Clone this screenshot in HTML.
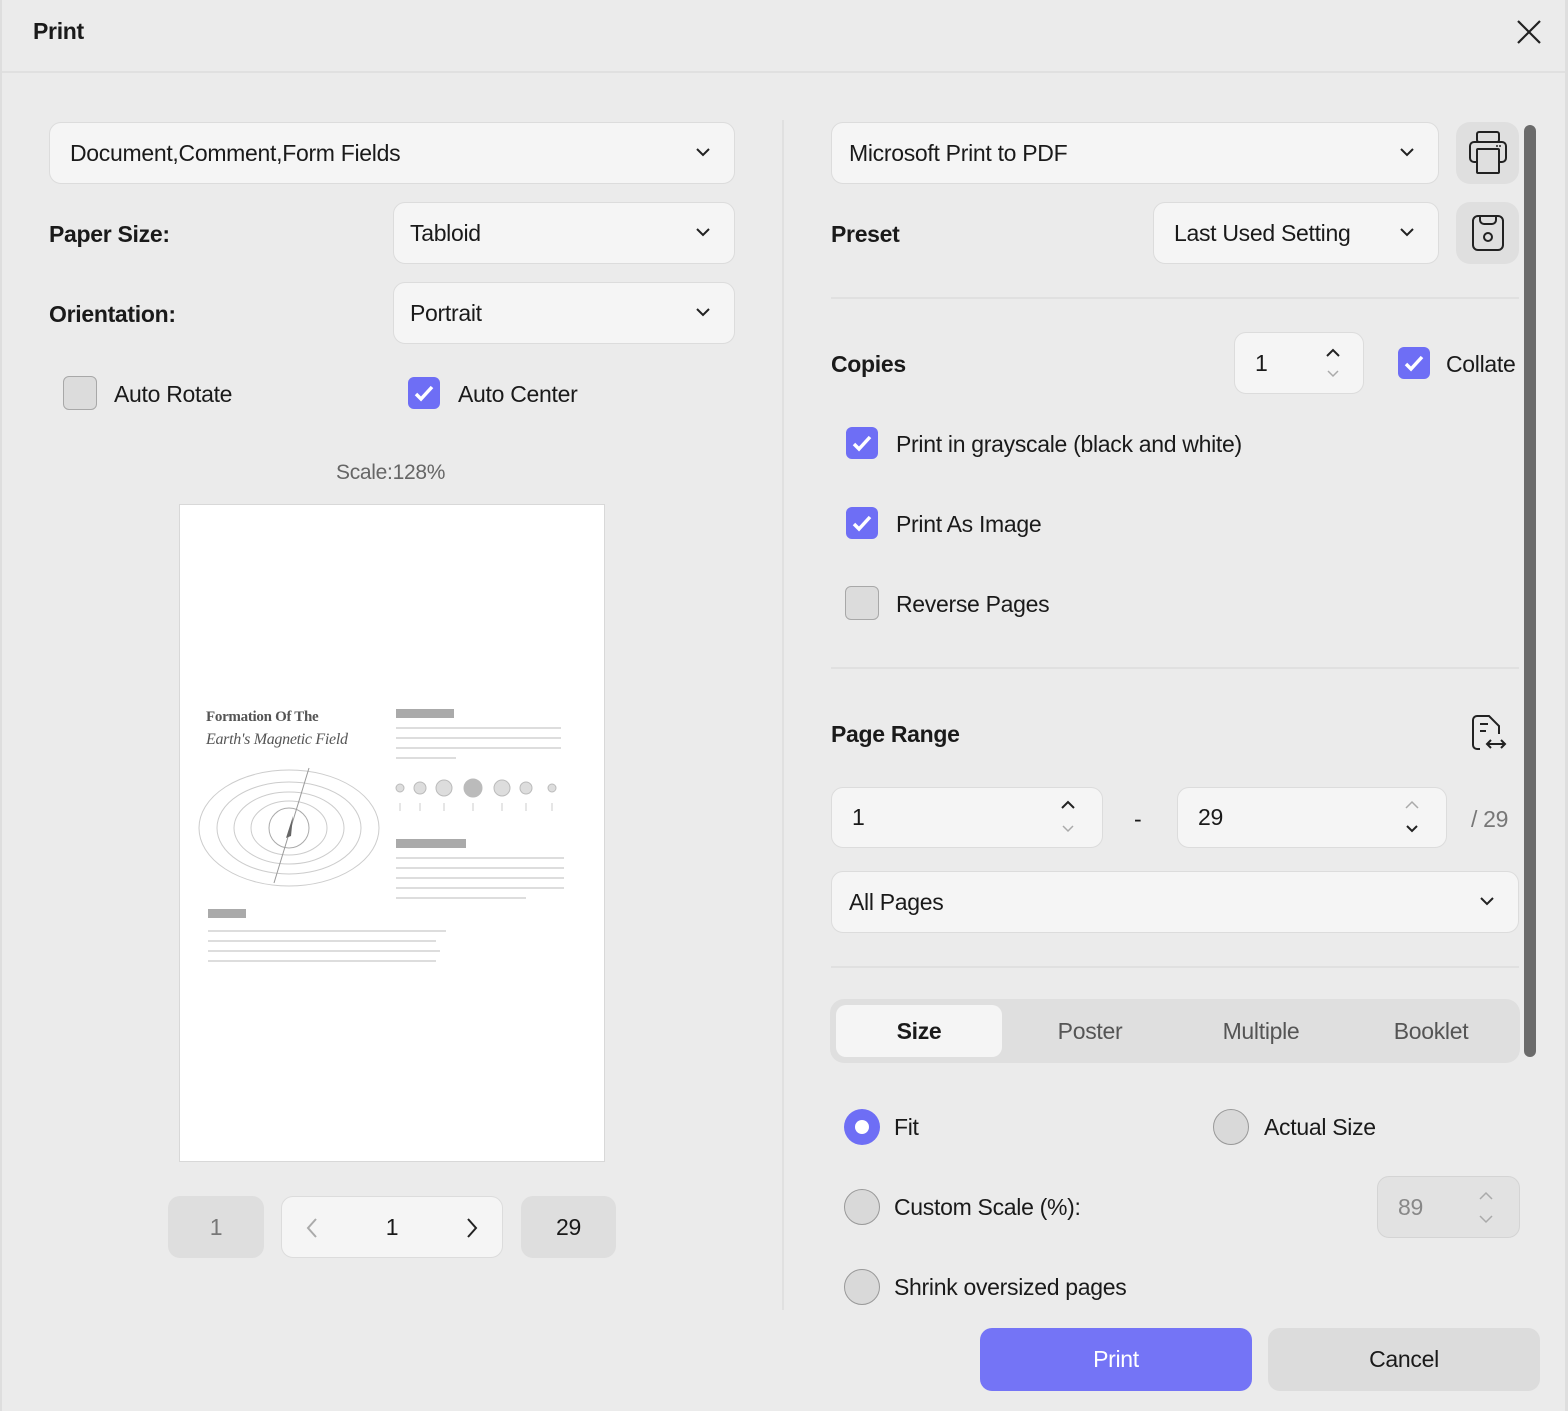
<!DOCTYPE html>
<html><head><meta charset="utf-8"><style>
*{box-sizing:border-box;margin:0;padding:0}
body{width:1568px;height:1411px;background:#ebebeb;font-family:"Liberation Sans",sans-serif;color:#1a1a1a;position:relative;overflow:hidden;letter-spacing:-0.3px}
.a{position:absolute}
.box{position:absolute;background:#f5f5f5;border:1.5px solid #dcdcdc;border-radius:12px;font-size:23px;display:flex;align-items:center;padding-left:18px}
.chev{position:absolute;right:24px;top:50%;margin-top:-5px}
.lbl{position:absolute;font-size:23px;font-weight:bold}
.t{position:absolute;font-size:23px}
.cb{position:absolute;width:32px;height:32px;border-radius:6px;background:#6e6ef5}
.cb.off{background:#dcdcdc;border:1.5px solid #a8a8a8}
.rd{position:absolute;width:36px;height:36px;border-radius:50%;background:#d9d9d9;border:1.5px solid #999}
.hr{position:absolute;height:1.5px;background:#e0e0e0}
.gl{position:absolute;height:2px;background:#ddd}
</style></head><body>
<div class="a" style="left:0;top:0;width:2px;height:1411px;background:#dedede"></div>
<div class="a" style="right:0;top:0;width:3px;height:1411px;background:#dedede"></div>
<div class="a" style="left:33px;top:18px;font-size:23px;font-weight:bold">Print</div>
<svg class="a" style="left:1516px;top:19px" width="26" height="26" viewBox="0 0 26 26"><path d="M2 2L24 24M24 2L2 24" stroke="#222" stroke-width="2.2"/></svg>
<div class="hr" style="left:2px;top:71px;width:1563px"></div>

<!-- left -->
<div class="box" style="left:49px;top:122px;width:686px;height:62px;padding-left:20px">Document,Comment,Form Fields<svg class="chev" width="14" height="9" viewBox="0 0 14 9"><path d="M1 1l6 6 6-6" fill="none" stroke="#222" stroke-width="2"/></svg></div>
<div class="lbl" style="left:49px;top:221px">Paper Size:</div>
<div class="box" style="left:393px;top:202px;width:342px;height:62px;padding-left:16px">Tabloid<svg class="chev" width="14" height="9" viewBox="0 0 14 9"><path d="M1 1l6 6 6-6" fill="none" stroke="#222" stroke-width="2"/></svg></div>
<div class="lbl" style="left:49px;top:301px">Orientation:</div>
<div class="box" style="left:393px;top:282px;width:342px;height:62px;padding-left:16px">Portrait<svg class="chev" width="14" height="9" viewBox="0 0 14 9"><path d="M1 1l6 6 6-6" fill="none" stroke="#222" stroke-width="2"/></svg></div>
<div class="cb off" style="left:63px;top:376px;width:34px;height:34px"></div>
<div class="t" style="left:114px;top:381px">Auto Rotate</div>
<div class="cb" style="left:408px;top:377px"><svg width="32" height="32"><path d="M8 17l5 5 11-12" fill="none" stroke="#fff" stroke-width="3.5"/></svg></div>
<div class="t" style="left:458px;top:381px">Auto Center</div>
<div class="t" style="left:336px;top:461px;font-size:21px;color:#666">Scale:128%</div>

<div class="a" style="left:179px;top:504px;width:426px;height:658px;background:#fff;border:1px solid #d8d8d8">
 <div class="a" style="left:26px;top:204px;font-family:'Liberation Serif',serif;font-size:15px;font-weight:bold;color:#555">Formation Of The</div>
 <div class="a" style="left:26px;top:226px;font-family:'Liberation Serif',serif;font-size:16px;font-style:italic;color:#555">Earth's Magnetic Field</div>
 <svg class="a" style="left:14px;top:258px" width="190" height="130" viewBox="0 0 190 130">
  <g fill="none" stroke="#ccc" stroke-width="1">
   <ellipse cx="95" cy="65" rx="90" ry="58"/><ellipse cx="95" cy="65" rx="72" ry="46"/><ellipse cx="95" cy="65" rx="55" ry="36"/><ellipse cx="95" cy="65" rx="38" ry="27"/><circle cx="95" cy="65" r="20" stroke="#aaa"/>
   <path d="M80 120L115 5" stroke="#999"/>
  </g><path d="M92 75l7-22-2 20z" fill="#666"/>
 </svg>
 <div class="a" style="left:216px;top:204px;width:58px;height:9px;background:#aaa"></div>
 <div class="gl" style="left:216px;top:222px;width:165px"></div><div class="gl" style="left:216px;top:232px;width:165px"></div><div class="gl" style="left:216px;top:242px;width:165px"></div><div class="gl" style="left:216px;top:252px;width:60px"></div>
 <svg class="a" style="left:212px;top:270px" width="175" height="45"><g fill="#ddd" stroke="#bbb"><circle cx="8" cy="13" r="4"/><circle cx="28" cy="13" r="6"/><circle cx="52" cy="13" r="8"/><circle cx="81" cy="13" r="9" fill="#bbb"/><circle cx="110" cy="13" r="8"/><circle cx="134" cy="13" r="6"/><circle cx="160" cy="13" r="4"/></g><g stroke="#ccc"><path d="M8 28v8M28 28v8M52 28v8M81 28v8M110 28v8M134 28v8M160 28v8"/></g></svg>
 <div class="a" style="left:216px;top:334px;width:70px;height:9px;background:#aaa"></div>
 <div class="gl" style="left:216px;top:352px;width:168px"></div><div class="gl" style="left:216px;top:362px;width:168px"></div><div class="gl" style="left:216px;top:372px;width:168px"></div><div class="gl" style="left:216px;top:382px;width:168px"></div><div class="gl" style="left:216px;top:392px;width:130px"></div>
 <div class="a" style="left:28px;top:404px;width:38px;height:9px;background:#aaa"></div>
 <div class="gl" style="left:28px;top:425px;width:238px"></div><div class="gl" style="left:28px;top:435px;width:228px"></div><div class="gl" style="left:28px;top:445px;width:232px"></div><div class="gl" style="left:28px;top:455px;width:228px"></div>
</div>

<div class="a" style="left:168px;top:1196px;width:96px;height:62px;border-radius:12px;background:#dedede;font-size:23px;color:#777;text-align:center;line-height:62px">1</div>
<div class="box" style="left:281px;top:1196px;width:222px;height:62px;padding:0;justify-content:center">1
 <svg class="a" style="left:24px;top:20px" width="12" height="22"><path d="M10 2L2 11l8 9" fill="none" stroke="#aaa" stroke-width="2"/></svg>
 <svg class="a" style="right:24px;top:20px" width="12" height="22"><path d="M2 2l8 9-8 9" fill="none" stroke="#222" stroke-width="2"/></svg></div>
<div class="a" style="left:521px;top:1196px;width:95px;height:62px;border-radius:12px;background:#dedede;font-size:23px;text-align:center;line-height:62px">29</div>

<div class="a" style="left:782px;top:120px;width:1.5px;height:1190px;background:#e0e0e0"></div>

<!-- right -->
<div class="box" style="left:831px;top:122px;width:608px;height:62px;padding-left:17px">Microsoft Print to PDF<svg class="chev" width="14" height="9" viewBox="0 0 14 9"><path d="M1 1l6 6 6-6" fill="none" stroke="#222" stroke-width="2"/></svg></div>
<div class="a" style="left:1456px;top:122px;width:63px;height:62px;border-radius:14px;background:#dfdfdf"></div>
<svg class="a" style="left:1468px;top:130px" width="40" height="45" viewBox="0 0 40 45"><g fill="none" stroke="#222" stroke-width="2"><rect x="9" y="2" width="22" height="10" rx="2"/><path d="M9 32H6a4 4 0 0 1-4-4V16a4 4 0 0 1 4-4h28a4 4 0 0 1 4 4v12a4 4 0 0 1-4 4h-3"/><rect x="9" y="19" width="22" height="24" rx="1"/></g><circle cx="29" cy="16" r="1" fill="#222"/><circle cx="32" cy="16" r="1" fill="#222"/></svg>
<div class="lbl" style="left:831px;top:221px">Preset</div>
<div class="box" style="left:1153px;top:202px;width:286px;height:62px;padding-left:20px">Last Used Setting<svg class="chev" width="14" height="9" viewBox="0 0 14 9"><path d="M1 1l6 6 6-6" fill="none" stroke="#222" stroke-width="2"/></svg></div>
<div class="a" style="left:1456px;top:202px;width:63px;height:62px;border-radius:14px;background:#dfdfdf"></div>
<svg class="a" style="left:1471px;top:214px" width="34" height="38" viewBox="0 0 34 38"><g fill="none" stroke="#222" stroke-width="2"><rect x="2" y="2" width="30" height="34" rx="5"/><path d="M9 2v4a4 4 0 0 0 4 4h8a4 4 0 0 0 4-4V2"/><circle cx="17" cy="23" r="4"/></g></svg>
<div class="hr" style="left:831px;top:297px;width:688px"></div>

<div class="lbl" style="left:831px;top:351px">Copies</div>
<div class="box" style="left:1234px;top:332px;width:130px;height:62px;padding-left:20px">1
 <svg class="a" style="left:90px;top:15px" width="16" height="32"><path d="M2 8l6-6 6 6" fill="none" stroke="#222" stroke-width="2"/><path d="M3 23l5 5 5-5" fill="none" stroke="#aaa" stroke-width="1.5"/></svg></div>
<div class="cb" style="left:1398px;top:347px"><svg width="32" height="32"><path d="M8 17l5 5 11-12" fill="none" stroke="#fff" stroke-width="3.5"/></svg></div>
<div class="t" style="left:1446px;top:351px">Collate</div>
<div class="cb" style="left:846px;top:427px"><svg width="32" height="32"><path d="M8 17l5 5 11-12" fill="none" stroke="#fff" stroke-width="3.5"/></svg></div>
<div class="t" style="left:896px;top:431px">Print in grayscale (black and white)</div>
<div class="cb" style="left:846px;top:507px"><svg width="32" height="32"><path d="M8 17l5 5 11-12" fill="none" stroke="#fff" stroke-width="3.5"/></svg></div>
<div class="t" style="left:896px;top:511px">Print As Image</div>
<div class="cb off" style="left:845px;top:586px;width:34px;height:34px"></div>
<div class="t" style="left:896px;top:591px">Reverse Pages</div>
<div class="hr" style="left:831px;top:667px;width:688px"></div>

<div class="lbl" style="left:831px;top:721px">Page Range</div>
<svg class="a" style="left:1471px;top:714px" width="38" height="38" viewBox="0 0 38 38"><g fill="none" stroke="#222" stroke-width="2"><path d="M9 35H6a4 4 0 0 1-4-4V6a4 4 0 0 1 4-4h12l10 10v8"/><path d="M9 10h8M9 17h6M16 30h18M20 26l-4 4 4 4M30 26l4 4-4 4"/></g></svg>
<div class="box" style="left:831px;top:787px;width:272px;height:61px;padding-left:20px">1
 <svg class="a" style="left:228px;top:12px" width="16" height="36"><path d="M2 8l6-6 6 6" fill="none" stroke="#222" stroke-width="2"/><path d="M3 26l5 5 5-5" fill="none" stroke="#aaa" stroke-width="1.5"/></svg></div>
<div class="t" style="left:1134px;top:806px">-</div>
<div class="box" style="left:1177px;top:787px;width:270px;height:61px;padding-left:20px">29
 <svg class="a" style="left:226px;top:12px" width="16" height="36"><path d="M2 8l6-6 6 6" fill="none" stroke="#aaa" stroke-width="1.5"/><path d="M3 26l5 5 5-5" fill="none" stroke="#222" stroke-width="2"/></svg></div>
<div class="t" style="left:1471px;top:806px;color:#777">/ 29</div>
<div class="box" style="left:831px;top:871px;width:688px;height:62px;padding-left:17px">All Pages<svg class="chev" width="14" height="9" viewBox="0 0 14 9"><path d="M1 1l6 6 6-6" fill="none" stroke="#222" stroke-width="2"/></svg></div>
<div class="hr" style="left:831px;top:966px;width:688px"></div>

<div class="a" style="left:830px;top:999px;width:690px;height:64px;border-radius:14px;background:#dfdfdf"></div>
<div class="a" style="left:836px;top:1005px;width:166px;height:52px;border-radius:10px;background:#f5f5f5"></div>
<div class="t" style="left:836px;top:1018px;width:166px;text-align:center;font-weight:bold">Size</div>
<div class="t" style="left:1005px;top:1018px;width:170px;text-align:center;color:#555">Poster</div>
<div class="t" style="left:1176px;top:1018px;width:170px;text-align:center;color:#555">Multiple</div>
<div class="t" style="left:1346px;top:1018px;width:170px;text-align:center;color:#555">Booklet</div>

<div class="rd" style="left:844px;top:1109px;background:#6e6ef5;border:none"><div class="a" style="left:11px;top:11px;width:14px;height:14px;border-radius:50%;background:#fff"></div></div>
<div class="t" style="left:894px;top:1114px">Fit</div>
<div class="rd" style="left:1213px;top:1109px"></div>
<div class="t" style="left:1264px;top:1114px">Actual Size</div>
<div class="rd" style="left:844px;top:1189px"></div>
<div class="t" style="left:894px;top:1194px">Custom Scale (%):</div>
<div class="a" style="left:1377px;top:1176px;width:143px;height:62px;border-radius:12px;background:#e2e2e2;border:1.5px solid #d4d4d4;font-size:23px;color:#888;padding:17px 0 0 20px">89
 <svg class="a" style="left:100px;top:14px" width="16" height="34"><path d="M2 8l6-6 6 6" fill="none" stroke="#aaa" stroke-width="1.5"/><path d="M2 25l6 6 6-6" fill="none" stroke="#aaa" stroke-width="1.5"/></svg></div>
<div class="rd" style="left:844px;top:1269px"></div>
<div class="t" style="left:894px;top:1274px">Shrink oversized pages</div>

<div class="a" style="left:1524px;top:125px;width:12px;height:932px;border-radius:6px;background:#6b6b6b"></div>

<div class="a" style="left:980px;top:1328px;width:272px;height:63px;border-radius:12px;background:#7474f6;color:#fff;font-size:23px;text-align:center;line-height:63px">Print</div>
<div class="a" style="left:1268px;top:1328px;width:272px;height:63px;border-radius:12px;background:#dcdcdc;font-size:23px;text-align:center;line-height:63px">Cancel</div>
</body></html>
